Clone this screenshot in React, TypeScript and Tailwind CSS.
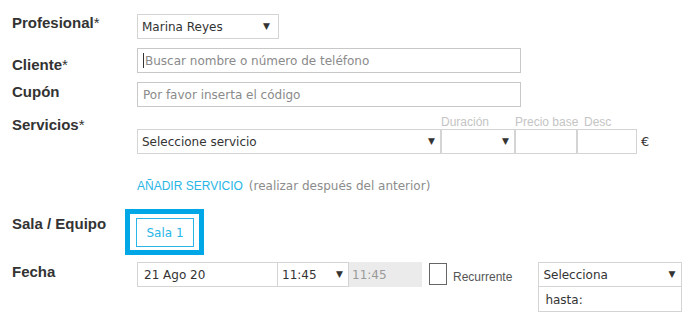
const LABEL = "shrink-0 pl-3 text-[15px] leading-[17px] font-bold text-[#333] font-['Liberation_Sans',Arial,sans-serif]"

function Arrow() {
  return <span className="text-[9px] leading-none text-[#333]">▼</span>
}

function Label({ text, star, className = '' }: { text: string; star?: boolean; className?: string }) {
  return (
    <div className={`w-[137px] ${LABEL} ${className}`}>
      {text}
      {star && <span className="font-normal">*</span>}
    </div>
  )
}

export default function App() {
  return (
    <div className="w-[689px] h-[315px] bg-white overflow-hidden font-['DejaVu_Sans',Verdana,sans-serif] text-[12px] text-[#333]">
      {/* Profesional */}
      <div className="flex items-start mt-[14px] h-[25px]">
        <Label text="Profesional" star />
        <div className="w-[142px] h-[25px] border border-[#d4d4d4] flex items-center justify-between pl-[4px] pr-[8px]">
          <span>Marina Reyes</span>
          <Arrow />
        </div>
      </div>

      {/* Cliente */}
      <div className="flex items-start mt-[9px] h-[25px]">
        <Label text="Cliente" star className="pt-[8px]" />
        <div className="w-[384px] h-[25px] border border-[#c8c8c8] flex items-center pl-[5px] text-[#8a8a8a]">
          <span className="w-px h-[15px] bg-[#333] mr-px" />
          <span>Buscar nombre o número de teléfono</span>
        </div>
      </div>

      {/* Cupón */}
      <div className="flex items-start mt-[9px] h-[25px]">
        <Label text="Cupón" className="pt-[1px]" />
        <div className="w-[384px] h-[25px] border border-[#c8c8c8] flex items-center pl-[5px] text-[#8a8a8a]">
          Por favor inserta el código
        </div>
      </div>

      {/* Servicios */}
      <div className="flex items-start mt-[8px]">
        <Label text="Servicios" star className="pt-[1px]" />
        <div className="flex flex-col">
          <div className="flex h-[14px] text-[12px] leading-[14px] text-[#c4c4c4] font-['Liberation_Sans',Arial,sans-serif]">
            <span className="w-[304px]" />
            <span className="w-[74px]">Duración</span>
            <span className="w-[69px]">Precio base</span>
            <span>Desc</span>
          </div>
          <div className="flex items-center h-[25px]">
            <div className="w-[304px] h-[25px] border border-[#d4d4d4] flex items-center justify-between pl-[4px] pr-[5px]">
              <span>Seleccione servicio</span>
              <Arrow />
            </div>
            <div className="w-[74px] h-[25px] border border-[#d4d4d4] flex items-center justify-end pr-[5px]">
              <Arrow />
            </div>
            <div className="w-[62px] h-[25px] border border-[#d4d4d4]" />
            <div className="w-[60px] h-[25px] border border-[#d4d4d4]" />
            <span className="ml-[4px] text-[13px]">€</span>
          </div>
        </div>
      </div>

      {/* Añadir servicio */}
      <div className="flex items-center mt-[25px] h-[14px] pl-[137px]">
        <span className="text-[12px] text-[#29b6e6] font-['Liberation_Sans',Arial,sans-serif]">AÑADIR SERVICIO</span>
        <span className="ml-[6px] text-[12px] text-[#8c8c8c]">(realizar después del anterior)</span>
      </div>

      {/* Sala / Equipo */}
      <div className="flex items-start mt-[16px]">
        <div className={`w-[125px] ${LABEL} pt-[6px]`}>Sala / Equipo</div>
        <div className="w-[79px] h-[46px] border-[5px] border-[#00a7e6] pl-[6px] pt-[4px]">
          <div className="w-[58px] h-[29px] border border-[#29b6e6] flex items-center justify-center text-[#29b6e6]">
            Sala 1
          </div>
        </div>
      </div>

      {/* Fecha */}
      <div className="flex items-start mt-[7px]">
        <Label text="Fecha" className="pt-[1px]" />
        <div className="w-[141px] h-[25px] border border-[#d4d4d4] flex items-center pl-[6px]">21 Ago 20</div>
        <div className="w-[71px] h-[25px] border border-[#d4d4d4] border-l-0 flex items-center justify-between pl-[4px] pr-[5px]">
          <span>11:45</span>
          <Arrow />
        </div>
        <div className="w-[73px] h-[25px] bg-[#ebebeb] flex items-center pl-[3px] text-[#9a9a9a]">11:45</div>
        <div className="ml-[7px] mt-[1px] w-[18px] h-[22px] border border-[#666] bg-white" />
        <span className="ml-[6px] mt-[6px] text-[12px] text-[#555] font-['Liberation_Sans',Arial,sans-serif]">Recurrente</span>
        <div className="ml-[26px] flex flex-col">
          <div className="w-[144px] h-[25px] border border-[#d4d4d4] flex items-center justify-between pl-[4px] pr-[6px]">
            <span>Selecciona</span>
            <Arrow />
          </div>
          <div className="w-[144px] h-[25px] border border-t-0 border-[#d4d4d4] flex items-end pl-[6px] pb-[2px]">
            hasta:
          </div>
        </div>
      </div>
    </div>
  )
}
